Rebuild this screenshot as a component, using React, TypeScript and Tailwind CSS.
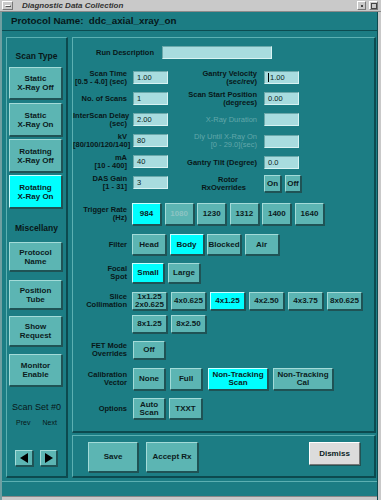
import React from 'react';

const NARROW = "font-['Liberation_Sans_Narrow','Liberation_Sans',Arial,sans-serif]";

const raised =
  'border border-t-[#a3dbd8] border-l-[#a3dbd8] border-r-[#1f5355] border-b-[#1f5355] shadow-[1px_1px_0_#1f5355]';

const Btn = ({
  children,
  className = '',
  on = false,
  dim = false,
}: {
  children: React.ReactNode;
  className?: string;
  on?: boolean;
  dim?: boolean;
}) => (
  <div
    className={`flex shrink-0 items-center justify-center whitespace-nowrap text-center font-bold leading-[8px] text-[8px] ${raised} ${
      on ? 'bg-[#00ffff] border-t-[#c8ffff] border-l-[#c8ffff]' : 'bg-[#5cb5b3]'
    } ${dim ? 'text-[#8cc4c3]' : 'text-[#0b1c1d]'} ${className}`}
  >
    <div>{children}</div>
  </div>
);

const Input = ({ value = '', cursor = false }: { value?: string; cursor?: boolean }) => (
  <div className="flex h-[13px] w-[35px] shrink-0 items-center border border-t-[#6aa8aa] border-l-[#6aa8aa] border-r-[#d9f3f3] border-b-[#d9f3f3] bg-[#a8dcdf] pl-[3px] text-[7.5px] text-[#0b1c1d]">
    {cursor && <span className="mr-[1px] h-[9px] w-[1px] bg-black" />}
    {value}
  </div>
);

const Label = ({ children, className = '', dim = false }: { children: React.ReactNode; className?: string; dim?: boolean }) => (
  <div
    className={`shrink-0 whitespace-nowrap text-right font-bold leading-[8px] text-[7.5px] ${
      dim ? 'text-[#62a7aa]' : 'text-[#081718]'
    } ${className}`}
  >
    {children}
  </div>
);

const leftRows = [
  { l: ['Scan Time', '[0.5 - 4.0] (sec)'], v: '1.00' },
  { l: ['No. of Scans'], v: '1' },
  { l: ['InterScan Delay', '(sec)'], v: '2.00' },
  { l: ['kV', '[80/100/120/140]'], v: '80' },
  { l: ['mA', '[10 - 400]'], v: '40' },
  { l: ['DAS Gain', '[1 - 31]'], v: '3' },
];

const SideBtn = ({ a, b, className, on = false }: { a: string; b: string; className: string; on?: boolean }) => (
  <Btn on={on} className={`ml-[2px] w-[53px] text-[8.5px] leading-[9px] ${className}`}>
    {a}
    <br />
    {b}
  </Btn>
);

export default function App() {
  return (
    <div className={`relative h-[500px] w-[381px] overflow-hidden bg-[#1c7d84] ${NARROW}`}>
      {/* title bar */}
      <div className="flex h-[12px] items-center border-b border-[#8a8a8a] bg-[#c9c9c9] font-['Liberation_Sans',Arial,sans-serif]">
        <div className="ml-[2px] flex h-[9px] w-[11px] items-center justify-center border border-t-white border-l-white border-r-[#777] border-b-[#777] bg-[#c9c9c9]">
          <div className="h-[2px] w-[6px] border border-t-white border-l-white border-r-[#555] border-b-[#555]" />
        </div>
        <div className="ml-[9px] text-[8px] font-bold italic text-[#333]">Diagnostic Data Collection</div>
        <div className="ml-auto mr-[3px] flex items-center gap-[3px]">
          <div className="flex h-[9px] w-[9px] items-center justify-center border border-t-white border-l-white border-r-[#777] border-b-[#777]">
            <div className="h-[2px] w-[2px] bg-[#444]" />
          </div>
          <div className="flex h-[9px] w-[9px] items-center justify-center border border-t-white border-l-white border-r-[#777] border-b-[#777]">
            <div className="h-[6px] w-[6px] border border-[#444]" />
          </div>
        </div>
      </div>

      {/* protocol bar */}
      <div className="flex h-[19px] items-center border-b border-[#0d4c51] pl-[11px] font-['Liberation_Sans',Arial,sans-serif] text-[9.8px] font-bold text-[#06181a]">
        Protocol Name:&nbsp; ddc_axial_xray_on
      </div>

      <div className="flex gap-[4px] pl-[6px] pt-[6px]">
        {/* left panel */}
        <div className="flex h-[441px] w-[62px] flex-col border-t border-l border-[#5cb0b2] border-r-2 border-b-2 border-r-[#0c4a4f] border-b-[#0c4a4f]">
          <div className="mt-[10px] flex h-[16px] items-center justify-center text-[8.5px] font-bold text-[#081718]">Scan Type</div>
          <SideBtn a="Static" b="X-Ray Off" className="mt-[3px] h-[32px]" />
          <SideBtn a="Static" b="X-Ray On" className="mt-[4px] h-[33px]" />
          <SideBtn a="Rotating" b="X-Ray Off" className="mt-[3px] h-[33px]" />
          <SideBtn a="Rotating" b="X-Ray On" on className="mt-[3px] h-[33px]" />
          <div className="mt-[12px] flex h-[16px] items-center justify-center text-[8.5px] font-bold text-[#081718]">Miscellany</div>
          <SideBtn a="Protocol" b="Name" className="mt-[6px] h-[29px]" />
          <SideBtn a="Position" b="Tube" className="mt-[9px] h-[29px]" />
          <SideBtn a="Show" b="Request" className="mt-[7px] h-[30px]" />
          <SideBtn a="Monitor" b="Enable" className="mt-[8px] h-[32px]" />
          <div className="mt-[14px] flex h-[16px] items-center justify-center text-[9px] text-[#081718]">Scan Set #0</div>
          <div className="mt-[2px] flex h-[10px] items-center justify-center gap-[12px] text-[7px] text-[#081718]">
            <span>Prev</span>
            <span>Next</span>
          </div>
          <div className="mt-[22px] flex gap-[7px] pl-[8px]">
            <Btn className="h-[16px] w-[18px]">
              <svg width="10" height="10" viewBox="0 0 10 10">
                <polygon points="9,0 9,10 1,5" fill="#000" />
              </svg>
            </Btn>
            <Btn className="h-[16px] w-[17px]">
              <svg width="10" height="10" viewBox="0 0 10 10">
                <polygon points="1,0 1,10 9,5" fill="#000" />
              </svg>
            </Btn>
          </div>
        </div>

        {/* right column */}
        <div className="flex w-[304px] flex-col gap-[2px]">
          <div className="h-[396px] border-t border-l border-[#5cb0b2] border-r-2 border-b-2 border-r-[#0c4a4f] border-b-[#0c4a4f]">
            <div className="mt-[8px] flex items-center">
              <Label className="w-[81px]">Run Description</Label>
              <div className="ml-[8px] h-[13px] w-[110px] border border-t-[#6aa8aa] border-l-[#6aa8aa] border-r-[#d9f3f3] border-b-[#d9f3f3] bg-[#a8dcdf]" />
            </div>

            <div className="mt-[8px] flex">
              <div className="flex flex-col">
                {leftRows.map((r) => (
                  <div key={r.l[0]} className="flex h-[21px] items-center">
                    <Label className="w-[54px]">
                      {r.l.map((t, i) => (
                        <div key={i}>{t}</div>
                      ))}
                    </Label>
                    <div className="ml-[6px]">
                      <Input value={r.v} />
                    </div>
                  </div>
                ))}
              </div>
              <div className="flex flex-col">
                <div className="flex h-[21px] items-center">
                  <Label className="w-[89px]">
                    Gantry Velocity
                    <br />
                    (sec/rev)
                  </Label>
                  <div className="ml-[7px]">
                    <Input value="1.00" cursor />
                  </div>
                </div>
                <div className="flex h-[21px] items-center">
                  <Label className="w-[89px]">
                    Scan Start Position
                    <br />
                    (degrees)
                  </Label>
                  <div className="ml-[7px]">
                    <Input value="0.00" />
                  </div>
                </div>
                <div className="flex h-[21px] items-center">
                  <Label dim className="w-[89px] font-normal">
                    X-Ray Duration
                  </Label>
                  <div className="ml-[7px]">
                    <Input />
                  </div>
                </div>
                <div className="flex h-[22px] items-center">
                  <Label dim className="w-[89px] font-normal">
                    Dly Until X-Ray On
                    <br />
                    [0 - 29.0](sec)
                  </Label>
                  <div className="ml-[7px]">
                    <Input />
                  </div>
                </div>
                <div className="flex h-[21px] items-center">
                  <Label className="w-[89px]">Gantry Tilt (Degree)</Label>
                  <div className="ml-[7px]">
                    <Input value="0.0" />
                  </div>
                </div>
                <div className="flex h-[21px] items-center">
                  <Label className="mr-[11px] w-[78px] text-center">
                    <div className="pl-[42px] text-center">Rotor</div>
                    <div className="text-right">RxOverrides</div>
                  </Label>
                  <div className="ml-[7px] flex gap-[4px]">
                    <Btn className="h-[17px] w-[17px]">On</Btn>
                    <Btn className="h-[17px] w-[16px]">Off</Btn>
                  </div>
                </div>
              </div>
            </div>

            {/* Trigger rate */}
            <div className="mt-[9px] flex items-center">
              <Label className="w-[54px]">
                Trigger Rate
                <br />
                (Hz)
              </Label>
              <div className="ml-[5px] flex gap-[3.6px]">
                <Btn on className="h-[22px] w-[29px]">984</Btn>
                <Btn dim className="h-[22px] w-[29px]">1080</Btn>
                <Btn className="h-[22px] w-[29px]">1230</Btn>
                <Btn className="h-[22px] w-[29px]">1312</Btn>
                <Btn className="h-[22px] w-[29px]">1400</Btn>
                <Btn className="h-[22px] w-[29px]">1640</Btn>
              </div>
            </div>

            {/* Filter */}
            <div className="mt-[9px] flex items-center">
              <Label className="w-[54px]">Filter</Label>
              <div className="ml-[5px] flex gap-[3.5px]">
                <Btn className="h-[21px] w-[34px]">Head</Btn>
                <Btn on className="h-[21px] w-[34px]">Body</Btn>
                <Btn className="h-[21px] w-[34px]">Blocked</Btn>
                <Btn className="h-[21px] w-[34px]">Air</Btn>
              </div>
            </div>

            {/* Focal spot */}
            <div className="mt-[8px] flex items-center">
              <Label className="w-[54px]">
                Focal
                <br />
                Spot
              </Label>
              <div className="ml-[5px] flex gap-[4px]">
                <Btn on className="h-[20px] w-[32px]">Small</Btn>
                <Btn className="h-[20px] w-[32px]">Large</Btn>
              </div>
            </div>

            {/* Slice collimation */}
            <div className="mt-[9px] flex items-start">
              <Label className="flex h-[18px] w-[54px] flex-col justify-center">
                <div>Slice</div>
                <div>Collimation</div>
              </Label>
              <div className="ml-[5px] flex flex-col gap-[5px]">
                <div className="flex gap-[4px]">
                  <Btn className="h-[18px] w-[35px]">
                    1x1.25
                    <br />
                    2x0.625
                  </Btn>
                  <Btn className="h-[18px] w-[35px]">4x0.625</Btn>
                  <Btn on className="h-[18px] w-[35px]">4x1.25</Btn>
                  <Btn className="h-[18px] w-[35px]">4x2.50</Btn>
                  <Btn className="h-[18px] w-[35px]">4x3.75</Btn>
                  <Btn className="h-[18px] w-[35px]">8x0.625</Btn>
                </div>
                <div className="flex gap-[4px]">
                  <Btn className="h-[18px] w-[35px]">8x1.25</Btn>
                  <Btn className="h-[18px] w-[35px]">8x2.50</Btn>
                </div>
              </div>
            </div>

            {/* FET */}
            <div className="mt-[8px] flex items-center">
              <Label className="w-[54px]">
                FET Mode
                <br />
                Overrides
              </Label>
              <div className="ml-[6px] flex">
                <Btn className="h-[18px] w-[32px]">Off</Btn>
              </div>
            </div>

            {/* Calibration */}
            <div className="mt-[9px] flex items-center">
              <Label className="w-[54px]">
                Calibration
                <br />
                Vector
              </Label>
              <div className="ml-[6px] flex">
                <Btn className="h-[22px] w-[32px]">None</Btn>
                <Btn className="ml-[5px] h-[22px] w-[32px]">Full</Btn>
                <Btn on className="ml-[6px] h-[22px] w-[60px]">
                  Non-Tracking
                  <br />
                  Scan
                </Btn>
                <Btn className="ml-[5px] h-[22px] w-[60px]">
                  Non-Tracking
                  <br />
                  Cal
                </Btn>
              </div>
            </div>

            {/* Options */}
            <div className="mt-[8px] flex items-center">
              <Label className="w-[54px]">Options</Label>
              <div className="ml-[6px] flex gap-[4px]">
                <Btn className="h-[21px] w-[32px]">
                  Auto
                  <br />
                  Scan
                </Btn>
                <Btn className="h-[21px] w-[33px]">TXXT</Btn>
              </div>
            </div>
          </div>

          {/* bottom panel */}
          <div className="flex h-[43px] items-start border-t border-l border-[#5cb0b2] border-r-2 border-b-2 border-r-[#0c4a4f] border-b-[#0c4a4f] pt-[6px]">
            <Btn className="ml-[15px] h-[30px] w-[50px]">Save</Btn>
            <Btn className="ml-[8px] h-[30px] w-[52px]">Accept Rx</Btn>
            <Btn className="ml-auto mr-[14px] h-[23px] w-[51px] !bg-[#dcdcdc] border-t-white border-l-white border-r-[#777] border-b-[#777]">
              Dismiss
            </Btn>
          </div>
        </div>
      </div>

      {/* bottom strip */}
      <div className="mt-[3px] h-[15px] border-t border-[#5cb0b2]" />
      <div className="h-[10px] border-t border-[#888] bg-[#c9c9c9]" />

      {/* window edges */}
      <div className="pointer-events-none absolute bottom-0 right-0 top-[12px] w-[4px] border-l border-[#0c4a4f] bg-[#c9c9c9]" />
      <div className="pointer-events-none absolute bottom-0 left-0 top-[12px] w-[2px] bg-[#6f9fa1]" />
    </div>
  );
}
